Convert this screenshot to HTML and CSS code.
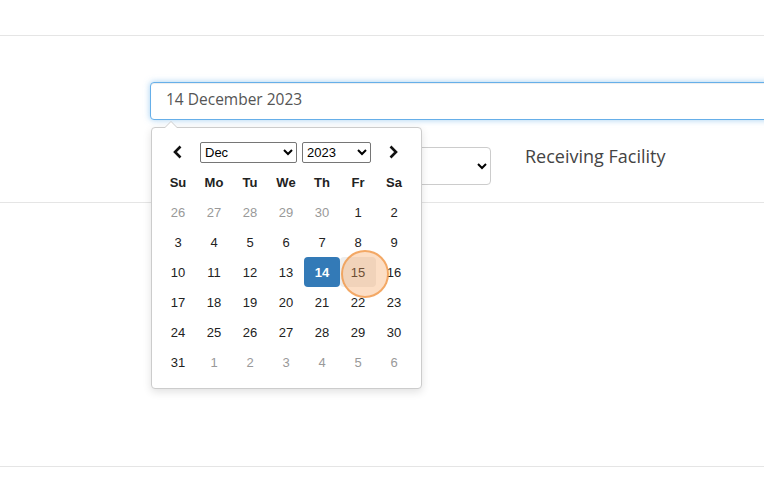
FILE: index.html
```html
<!DOCTYPE html>
<html lang="en">
<head>
    <meta charset="UTF-8">
    <title>Transfer Form</title>
    <link rel="stylesheet" href="styles.css">
</head>
<body>

<div class="top-bar"></div>

<div class="form-section">
    <div class="field-row">
        <input class="date-input" type="text" value="14 December 2023">
    </div>
    <div class="field-row second-row">
        <select class="facility-select"><option></option></select>
        <label class="field-label">Receiving Facility</label>
    </div>
</div>

<div class="empty-section"></div>

<!-- datepicker popup -->
<div class="datepicker">
    <div class="dp-header">
        <span class="dp-nav">
            <svg width="12" height="14" viewBox="0 0 12 14"><path d="M8.5 1.5 L3 7 L8.5 12.5" fill="none" stroke="#111" stroke-width="2.6"/></svg>
        </span>
        <select class="dp-month">
            <option>Jan</option><option>Feb</option><option>Mar</option><option>Apr</option>
            <option>May</option><option>Jun</option><option>Jul</option><option>Aug</option>
            <option>Sep</option><option>Oct</option><option>Nov</option><option selected>Dec</option>
        </select>
        <select class="dp-year">
            <option>2022</option><option selected>2023</option><option>2024</option>
        </select>
        <span class="dp-nav">
            <svg width="12" height="14" viewBox="0 0 12 14"><path d="M3.5 1.5 L9 7 L3.5 12.5" fill="none" stroke="#111" stroke-width="2.6"/></svg>
        </span>
    </div>
    <table class="dp-table">
        <thead>
            <tr><th>Su</th><th>Mo</th><th>Tu</th><th>We</th><th>Th</th><th>Fr</th><th>Sa</th></tr>
        </thead>
        <tbody id="dpBody"></tbody>
    </table>
    <span class="click-mark"></span>
</div>

<script>
    // Build the days of December 2023
    var body = document.getElementById('dpBody');
    var days = [];
    [26, 27, 28, 29, 30].forEach(function (d) { days.push({ n: d, old: true }); });
    for (var i = 1; i <= 31; i++) days.push({ n: i });
    for (var j = 1; j <= 6; j++) days.push({ n: j, old: true });

    for (var r = 0; r < 6; r++) {
        var tr = document.createElement('tr');
        for (var c = 0; c < 7; c++) {
            var day = days[r * 7 + c];
            var td = document.createElement('td');
            td.innerText = day.n;
            if (day.old) td.className = 'old';
            else if (day.n === 14) td.className = 'active';
            else if (day.n === 15) td.className = 'hover';
            tr.appendChild(td);
        }
        body.appendChild(tr);
    }
</script>

</body>
</html>
```

FILE: styles.css
```css
body {
    margin: 0;
    font-family: "Open Sans", "Liberation Sans", sans-serif;
    background: #fff;
    color: #333;
    overflow: hidden;
}
.top-bar {
    height: 35px;
    border-bottom: 1px solid #e5e5e5;
}
.form-section {
    padding-left: 150px;
    height: 166px;
    border-bottom: 1px solid #e5e5e5;
    overflow: hidden;
}
.field-row {
    display: flex;
    align-items: center;
}
.field-row:first-child {
    margin-top: 46px;
}
.date-input {
    flex-shrink: 0;
    box-sizing: border-box;
    width: 720px;
    height: 38px;
    padding: 0 15px 5px 15px;
    font-family: "Open Sans", sans-serif;
    font-size: 15.5px;
    color: #555;
    border: 1px solid #66afe9;
    border-radius: 4px;
    outline: none;
    box-shadow: inset 0 1px 1px rgba(0, 0, 0, .075), 0 0 6px rgba(102, 175, 233, .6);
}
.second-row {
    margin-top: 27px;
    padding-left: 255px;
}
.facility-select {
    box-sizing: border-box;
    width: 86px;
    height: 38px;
    border: 1px solid #ccc;
    border-radius: 4px;
    background: #fff;
}
.field-label {
    margin-left: 34px;
    margin-top: -21px;
    font-size: 18px;
    color: #444;
}
.empty-section {
    height: 263px;
    border-bottom: 1px solid #e5e5e5;
}
.datepicker {
    position: absolute;
    left: 151px;
    top: 127px;
    box-sizing: border-box;
    width: 271px;
    padding: 9px 9px 11px 8px;
    background: #fff;
    border: 1px solid #ccc;
    border-radius: 4px;
    box-shadow: 0 3px 8px rgba(0, 0, 0, .12);
    font-family: "Liberation Sans", Arial, sans-serif;
    font-size: 13px;
    color: #222;
}
.datepicker:before {
    content: "";
    position: absolute;
    top: -7px;
    left: 12px;
    border-left: 7px solid transparent;
    border-right: 7px solid transparent;
    border-bottom: 7px solid #ccc;
}
.datepicker:after {
    content: "";
    position: absolute;
    top: -6px;
    left: 13px;
    border-left: 6px solid transparent;
    border-right: 6px solid transparent;
    border-bottom: 6px solid #fff;
}
.dp-header {
    display: flex;
    align-items: center;
    height: 30px;
}
.dp-nav {
    width: 36px;
    display: flex;
    justify-content: center;
}
.dp-header select {
    height: 21px;
    font-family: "Liberation Sans", Arial, sans-serif;
    font-size: 13px;
    color: #000;
    border: 1px solid #767676;
    border-radius: 2px;
    background: #fff;
}
.dp-month {
    width: 97px;
    margin-left: 4px;
}
.dp-year {
    width: 69px;
    margin-left: 5px;
    margin-right: 4px;
}
.dp-table {
    border-collapse: collapse;
    border-spacing: 0;
}
.dp-table th,
.dp-table td {
    width: 36px;
    height: 30px;
    padding: 0;
    text-align: center;
}
.dp-table th {
    font-weight: bold;
    color: #222;
}
.dp-table td.old {
    color: #999;
}
.dp-table td.active {
    background: #337ab7;
    color: #fff;
    font-weight: bold;
    border-radius: 4px;
}
.dp-table td.hover {
    background: #eee;
    border-radius: 4px;
}
.click-mark {
    position: absolute;
    left: 189px;
    top: 122px;
    width: 44px;
    height: 44px;
    border-radius: 50%;
    background: rgba(245, 160, 90, .35);
    border: 2px solid rgba(240, 150, 70, .75);
}
```
